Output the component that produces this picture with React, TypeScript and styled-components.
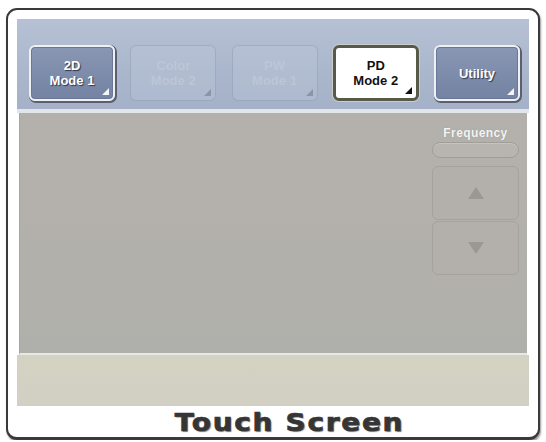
import * as React from 'react';
import styled, { createGlobalStyle, css } from 'styled-components';

type ModeState = 'on' | 'off' | 'selected';

interface IModeButton {
  top?: string;
  bottom: string;
  state: ModeState;
}

const modeButtons: IModeButton[] = [
  { top: '2D', bottom: 'Mode 1', state: 'on' },
  { top: 'Color', bottom: 'Mode 2', state: 'off' },
  { top: 'PW', bottom: 'Mode 1', state: 'off' },
  { top: 'PD', bottom: 'Mode 2', state: 'selected' },
  { bottom: 'Utility', state: 'on' }
];

const GlobalStyle = createGlobalStyle`
  html, body {
    margin: 0;
    padding: 0;
    background: #fff;
  }
  body {
    font-family: "Liberation Sans", Arial, sans-serif;
  }
`;

const Frame = styled.div`
  box-sizing: border-box;
  width: 534px;
  height: 432px;
  margin: 8px 0 0 6px;
  padding: 9px 9px 0 9px;
  background: #fff;
  border: 2px solid #3a3a3a;
  border-bottom-width: 3px;
  border-radius: 11px;
  box-shadow: 1px 2px 2px rgba(0, 0, 0, 0.4);
  display: flex;
  flex-direction: column;
`;

const Toolbar = styled.div`
  height: 94px;
  flex-shrink: 0;
  box-sizing: border-box;
  padding: 26px 9px 0 12px;
  display: flex;
  justify-content: space-between;
  align-items: flex-start;
  background: linear-gradient(180deg, #b6c1d5 0%, #aab6cb 60%, #a5b1c8 100%);
  border-bottom: 4px solid #e2e5ea;
`;

const buttonStates = {
  on: css`
    background: linear-gradient(180deg, #8997b4 0%, #7482a3 100%);
    border: 2px solid #eef0f4;
    box-shadow: 1px 1px 0 1px #5b6070, inset 0 0 0 1px #6b7796;
    color: #fff;
    text-shadow: 1px 1px 1px #2f3548;
  `,
  off: css`
    background: rgba(190, 200, 218, 0.35);
    border: 1px solid rgba(135, 148, 172, 0.45);
    color: #bcc6d8;
  `,
  selected: css`
    background: #fff;
    border: 3px solid #565a46;
    box-shadow: 0 0 0 1px #c9ccd2;
    color: #111;
  `
};

const ModeButton = styled.div<{ $state: ModeState }>`
  position: relative;
  box-sizing: border-box;
  width: 86px;
  height: 56px;
  border-radius: 6px;
  display: flex;
  flex-direction: column;
  align-items: center;
  justify-content: center;
  font-size: 13px;
  font-weight: bold;
  line-height: 15px;
  ${(p) => buttonStates[p.$state]}
`;

const Corner = styled.span<{ $state: ModeState }>`
  position: absolute;
  right: 4px;
  bottom: 4px;
  width: 0;
  height: 0;
  border-style: solid;
  border-width: 0 0 7px 7px;
  border-color: transparent transparent
    ${(p) => (p.$state === 'on' ? '#f2f4f8' : p.$state === 'selected' ? '#111' : '#8c95a8')}
    transparent;
`;

const Display = styled.div`
  height: 242px;
  flex-shrink: 0;
  box-sizing: border-box;
  margin: 0 2px;
  display: flex;
  justify-content: flex-end;
  padding: 13px 8px 0 0;
  background: linear-gradient(180deg, #b4b1ad 0%, #b2b0ab 80%, #afb0ab 100%);
  border-left: 1px solid #a8a6a2;
  border-bottom: 2px solid #e9e8e4;
`;

const SideColumn = styled.div`
  width: 87px;
  display: flex;
  flex-direction: column;
  align-items: stretch;
`;

const SideLabel = styled.div`
  text-align: center;
  color: #f4f4f2;
  font-size: 12px;
  font-weight: bold;
  letter-spacing: 0.4px;
  line-height: 14px;
  text-shadow: 0 0 1px #8c8a86;
  height: 16px;
`;

const FrequencyPill = styled.div`
  height: 14px;
  border: 1px solid #a19e9a;
  border-radius: 8px;
  background: #b8b5b1;
  box-shadow: inset 0 1px 0 #c6c4c0;
  margin-bottom: 8px;
`;

const StepButton = styled.div`
  box-sizing: border-box;
  height: 54px;
  border: 1px solid #a6a39f;
  border-radius: 6px;
  display: flex;
  align-items: center;
  justify-content: center;
  margin-bottom: 1px;
  background: #b3b0ac;
`;

const Tray = styled.div`
  height: 51px;
  flex-shrink: 0;
  background: linear-gradient(180deg, #d4d2c2 0%, #d2d0c4 100%);
`;

const Caption = styled.div`
  flex: 1;
  display: flex;
  align-items: center;
  justify-content: center;
  padding: 2px 0 0 32px;
`;

const CaptionText = styled.span`
  display: inline-block;
  transform: scaleX(1.12);
  font-family: "DejaVu Sans", "Liberation Sans", sans-serif;
  font-weight: bold;
  font-size: 25px;
  letter-spacing: 1.5px;
  color: #353535;
  -webkit-text-stroke: 0.7px #353535;
  text-shadow: 1px 1px 1px #8a8a8a;
`;

const Arrow = ({ up }: { up?: boolean }) => (
  <svg width="18" height="14" viewBox="0 0 18 14">
    <polygon points={up ? '9,1 17,13 1,13' : '1,1 17,1 9,13'} fill="#9b9893" />
  </svg>
);

export default function App() {
  return (
    <>
      <GlobalStyle />
      <Frame>
        <Toolbar>
          {modeButtons.map((b, i) => (
            <ModeButton key={i} $state={b.state}>
              {b.top && <span>{b.top}</span>}
              <span>{b.bottom}</span>
              <Corner $state={b.state} />
            </ModeButton>
          ))}
        </Toolbar>
        <Display>
          <SideColumn>
            <SideLabel>Frequency</SideLabel>
            <FrequencyPill />
            <StepButton>
              <Arrow up />
            </StepButton>
            <StepButton>
              <Arrow />
            </StepButton>
          </SideColumn>
        </Display>
        <Tray />
        <Caption>
          <CaptionText>Touch Screen</CaptionText>
        </Caption>
      </Frame>
    </>
  );
}
